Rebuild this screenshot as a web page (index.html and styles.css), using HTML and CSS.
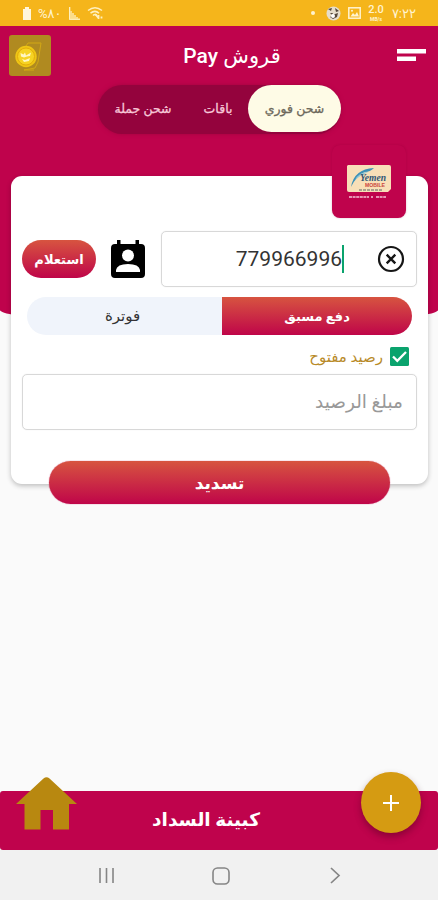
FILE: index.html
```html
<!DOCTYPE html>
<html lang="ar" dir="rtl">
<head>
<meta charset="utf-8">
<title>قروش Pay</title>
<link rel="stylesheet" href="styles.css">
</head>
<body>
<div class="app">
  <div class="status">
    <div class="status-group">
      <span class="clock">٧:٢٢</span>
      <span class="rate"><b>2.0</b><small>MB/s</small></span>
      <svg width="13" height="12" viewBox="0 0 13 12"><rect x=".8" y=".8" width="11.4" height="10.4" fill="none" stroke="#fff3cf" stroke-width="1.5"/><path d="M2.5 9.5 5 6l2 2 2-3 2 4.500z" fill="#fff3cf"/><circle cx="4" cy="3.800" r="1" fill="#fff3cf"/></svg>
      <svg width="15" height="15" viewBox="0 0 15 15"><circle cx="7.500" cy="7.500" r="7" fill="#e5ddcb"/><path d="M2 3l4-1-1 3zM9 2l4 3-3 1zM4 7h3l-1 2zM9 8l3-1-1 4-4 2-3-2z" fill="#54483b"/><circle cx="7" cy="10" r="2" fill="#fff"/></svg>
      <i class="dot"></i>
    </div>
    <div class="status-group left">
      <svg width="17" height="15" viewBox="0 0 17 15" fill="none" stroke="#fff0bf" stroke-width="1.500"><path d="M1 4.500Q8 -1 15 4.500M3.500 7.200Q8 3.500 12 7.200M6 9.500Q8 7.500 10 9.500"/><path d="M8 8l3 3.500M11.500 9v4M14.500 10.500v2" stroke-width="1.800"/></svg>
      <svg width="13" height="13" viewBox="0 0 13 13"><path d="M1 0h1.500v4H4v2h2v2h2v2h2v1.500h2V13H1z" fill="#fbdc8b"/><path d="M1.500 0v12.300H12" fill="none" stroke="#fff0bf"/></svg>
      <span class="percent" dir="ltr">%٨٠</span>
      <svg width="10" height="13" viewBox="0 0 10 13"><path d="M3 0h4v2h2v11H1V2h2z" fill="#fff6dc"/></svg>
    </div>
  </div>

  <main class="screen">
    <header class="header">
      <svg class="menu" width="30" height="14" viewBox="0 0 30 14"><path d="M0 1h29v4.500H0zM0 8.500h19V13H0z" fill="#fff"/></svg>
      <h1><span class="title">قروش Pay</span></h1>
      <svg class="logo" width="42" height="41" viewBox="0 0 42 41"><rect width="42" height="41" rx="3" fill="#b08a20"/><g fill="none" stroke="#d2a815" stroke-width="1"><path d="M17 11l2-3h13l-3 19-3 6-11 2M15 35h10"/></g><circle cx="17" cy="21.500" r="10.700" fill="#efc514"/><circle cx="17" cy="21.500" r="8.500" fill="#f6d323" stroke="#e3ac0b"/><path d="M11.500 18l3 1.500 1.500-2 1 3 5-3-1 3.500-3 .500-3 1-3-1zM13 24l3 1 5-2-1 3-5 1z" fill="#fff6c4"/></svg>
    </header>

    <nav class="tabs">
      <a class="tab active"><span>شحن فوري</span></a>
      <a class="tab mid"><span>باقات</span></a>
      <a class="tab last"><span>شحن جملة</span></a>
    </nav>

    <section class="card">
      <div class="provider">
        <svg width="46" height="36" viewBox="0 0 46 36"><path d="M2 1h41q2 0 2 2v22l-3 3H3q-2 0-2-2V2z" fill="#f8dfb8"/><path d="M5 23Q8 5 28 4q-4 4-9 4-8 3-14 15z" fill="#3d91b8"/><path d="M9 16Q13 8 22 8q-7 3-13 8z" fill="#92c8d5"/><text x="14" y="17" textLength="26" lengthAdjust="spacingAndGlyphs" class="brand">Yemen</text><text x="19" y="23" textLength="20" lengthAdjust="spacingAndGlyphs" class="brand-sub">MOBILE</text><path d="M13 26h24" stroke="#8d8d7f" stroke-width="1.300" stroke-dasharray="3 1"/><path d="M3 33h20M25 33h2M30 33h10" stroke="#f5c3d4" stroke-width="1.600" stroke-dasharray="3 .6"/></svg>
      </div>
      <div class="phone-row">
        <div class="field phone">
          <svg width="28" height="28" viewBox="0 0 28 28" fill="none" stroke="#161616"><circle cx="14" cy="14" r="12" stroke-width="2.200"/><path d="M9.700 9.700l8.600 8.600M18.300 9.700l-8.600 8.600" stroke-width="2.400"/></svg>
          <span class="caret"></span><span class="number">779966996</span>
        </div>
        <svg class="contact" width="34" height="38" viewBox="0 0 34 38"><path d="M6 0h3.500v4h15V0H28v4h2q4 0 4 4v26q0 4-4 4H4q-4 0-4-4V8q0-4 4-4h2z" fill="#000"/><circle cx="17" cy="15.500" r="6" fill="#fff"/><path d="M5 32v-2q1-6 12-6t12 6v2z" fill="#fff"/></svg>
        <button class="gradient inquire"><span>استعلام</span></button>
      </div>
      <div class="segments">
        <div class="gradient segment-on"><span>دفع مسبق</span></div>
        <div class="segment-off"><span>فوترة</span></div>
      </div>
      <label class="check">
        <svg width="19" height="19" viewBox="0 0 19 19"><rect width="19" height="19" rx="1.500" fill="#0aa36d"/><path d="M3 9.500l4.300 4.300L16 5" fill="none" stroke="#fff" stroke-width="2.300"/></svg>
        <span>رصيد مفتوح</span>
      </label>
      <div class="field amount"><span>مبلغ الرصيد</span></div>
      <button class="gradient submit"><span>تسديد</span></button>
    </section>
  </main>

  <footer class="bottom">
    <span class="bottom-title">كبينة السداد</span>
    <svg class="home" width="61" height="53" viewBox="0 0 61 53"><path d="M27.500 1.500Q30.500-1 33.500 1.500L61 27h-8v25.500H37V33H24.500v19.500H8.500V27H0z" fill="#b88810"/></svg>
    <div class="fab"><svg width="16" height="16" viewBox="0 0 16 16"><path d="M8 0v16M0 8h16" stroke="#fff" stroke-width="2"/></svg></div>
  </footer>
  <div class="system-nav" dir="ltr">
    <svg width="18" height="17" viewBox="0 0 18 17"><path d="M2 1v15M8.500 1v15M15 1v15" stroke="#858585" stroke-width="1.600"/></svg>
    <svg width="18" height="18" viewBox="0 0 18 18"><rect x="1" y="1" width="16" height="16" rx="4.500" fill="none" stroke="#858585" stroke-width="1.600"/></svg>
    <svg width="18" height="17" viewBox="0 0 18 17"><path d="M5 1l8 7.500L5 16" fill="none" stroke="#858585" stroke-width="1.700"/></svg>
  </div>
</div>
</body>
</html>
```
FILE: styles.css
```css
* { box-sizing: border-box; }
body { margin: 0; font-family: Roboto, "DejaVu Sans", sans-serif; }
svg { display: block; flex: none; }
span { display: inline-block; white-space: nowrap; }
button { border: 0; padding: 0; font: inherit; }

.app { width: 438px; height: 900px; display: flex; flex-direction: column; background: #fafafa; overflow: hidden; }

.status { height: 26px; flex: none; background: #f5b51b; display: flex; justify-content: space-between; align-items: center; padding: 0 22px; color: #fff3cf; }
.status-group { display: flex; align-items: center; gap: 7px; }
.status-group.left { gap: 6px; }
.clock { font-size: 13px; width: 25px; }
.rate { display: flex; flex-direction: column; align-items: center; width: 16px; }
.rate b { font-size: 11px; line-height: 12px; font-weight: 500; }
.rate small { font-size: 5px; line-height: 6px; font-weight: bold; }
.dot { width: 4px; height: 4px; border-radius: 50%; background: #fff3cf; margin-right: 4px; }
.percent { font-size: 13px; width: 24px; }

.screen { flex: 1; position: relative; z-index: 0; }
.screen::before { content: ""; position: absolute; z-index: -1; inset: 0 0 auto; height: 298px; background: #bf034c; border-radius: 0 0 50% 50% / 0 0 14px 14px; }

.header { height: 59px; display: flex; align-items: center; justify-content: space-between; padding: 0 11px 0 9px; }
.header h1 { margin: 0; width: 98px; font-size: 21px; font-weight: 500; color: #fff; display: flex; justify-content: center; position: relative; left: 8px; }
.menu { margin-bottom: 1px; }

.tabs { width: 243px; height: 49px; margin: 0 97px 0 0; border-radius: 25px; background: #94033d; display: flex; color: #f7c8d8; font-size: 12.500px; box-shadow: 0 0 4px #a30340; -webkit-text-stroke: .3px currentColor; }
.tab { display: flex; align-items: center; justify-content: center; height: 47px; }
.active { width: 93px; border-radius: 24px; background: #fefbe6; color: #6d685b; }
.mid { width: 60px; }
.last { width: 90px; }

.card { width: 417px; height: 308px; margin: 42px 10px 0 0; padding: 0 11px; background: #fff; border-radius: 11px; box-shadow: 0 2px 5px rgba(0,0,0,.24); position: relative; display: flex; flex-direction: column; }
.card > * { flex: none; }
.provider { width: 74px; height: 73px; margin: -31px 11px 0 0; padding-top: 19px; border-radius: 8px; background: #bf034c; display: flex; justify-content: center; box-shadow: 0 0 2px rgba(120,0,50,.3); }
.brand { font: italic bold 10px "Liberation Serif", serif; fill: #315676; direction: ltr; }
.brand-sub { font: bold 5px "Liberation Sans", sans-serif; fill: #ca443c; direction: ltr; }

.phone-row { margin-top: 13px; display: flex; align-items: center; }
.field { height: 56px; border: 1.500px solid #d8d8d8; box-shadow: 0 0 1px #ddd; border-radius: 5px; display: flex; align-items: center; }
.phone { width: 256px; padding-right: 11px; }
.caret { width: 2px; height: 28px; background: #0aa36d; margin-right: 33px; }
.number { font-size: 21px; color: #333; }
.contact { margin: 0 16px 0 15px; }
.gradient { background: linear-gradient(#d75440, #bf0549); color: #fff; display: flex; align-items: center; justify-content: center; font-weight: bold; }
.inquire { width: 74px; height: 38px; border-radius: 19px; font-size: 13px; }

.segments { height: 38px; margin: 10px 5px 0 5px; display: flex; border-radius: 19px; overflow: hidden; font-size: 15px; }
.segment-on { width: 190px; font-size: 13px; }
.segment-off { flex: 1; background: #f0f4fb; color: #333; display: flex; align-items: center; justify-content: center; padding-right: 4px; }
.check { height: 19px; margin: 12px 8px 0 0; display: flex; align-items: center; gap: 7px; color: #b88a28; font-size: 15px; }
.amount { height: 56px; margin-top: 8px; padding-right: 13px; color: #999; font-size: 18.500px; }
.submit { width: 341px; height: 43px; margin: 31px 27px 0 0; border-radius: 22px; font-size: 17px; box-shadow: 0 0 1px #bf0549; }

.bottom { height: 59px; flex: none; background: #bf034c; border-radius: 3px; position: relative; display: flex; align-items: center; justify-content: center; color: #fff; font-size: 18.500px; font-weight: bold; }
.bottom-title { position: relative; left: -13px; top: -1px; }
.home { position: absolute; left: 16px; top: -14px; }
.fab { position: absolute; left: 361px; top: -19px; width: 60px; height: 61px; border-radius: 50%; background: #d59b12; display: flex; align-items: center; justify-content: center; box-shadow: 0 4px 7px rgba(80,0,30,.45); }
.system-nav { height: 50px; flex: none; background: #f1f1f1; display: flex; align-items: center; justify-content: space-between; padding: 1px 94px 0 98px; }
```
